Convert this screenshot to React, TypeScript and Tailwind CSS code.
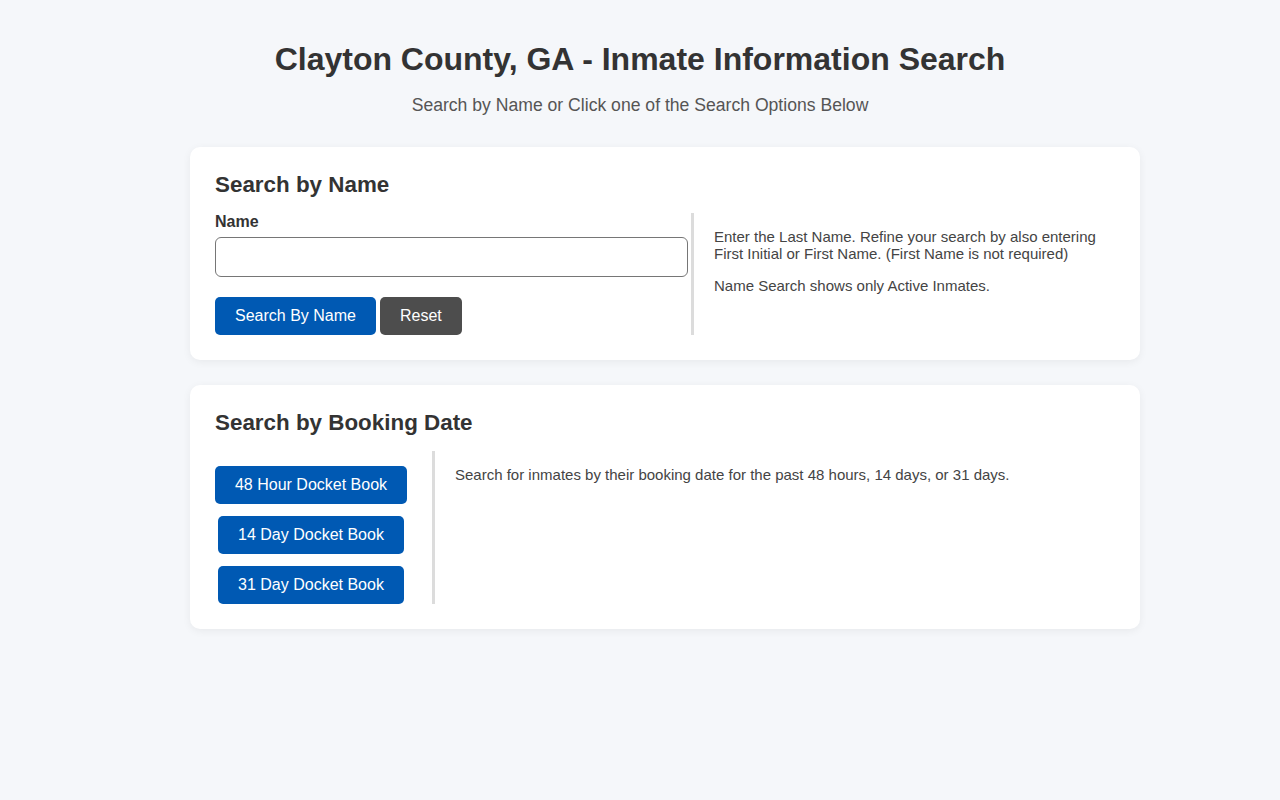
import React from "react";

export default function App() {
  return (
    <div className="min-h-[800px] bg-[#f5f7fa] pt-[41px] text-[#333]" style={{ fontFamily: '"Liberation Sans", Arial, sans-serif' }}>
      <h1 className="text-center text-[32px] font-bold leading-[37px] text-[#333]">
        Clayton County, GA - Inmate Information Search
      </h1>
      <p className="mt-[17px] text-center text-[17.6px] leading-[21px] text-[#555]">
        Search by Name or Click one of the Search Options Below
      </p>

      <div className="mx-auto mt-[31px] w-[1000px] pl-[50px]">
        <div className="w-[950px] rounded-[10px] bg-white px-[25px] pb-[25px] pt-[25px] shadow-[0_2px_8px_rgba(0,0,0,0.06)]">
          <h2 className="text-[22.4px] font-bold leading-[25px] text-[#333]">Search by Name</h2>
          <div className="mt-[16px] flex">
            <div className="w-[476px] pr-[3px]">
              <label className="block text-[16px] font-bold leading-[18px] text-[#333]">Name</label>
              <input
                type="text"
                className="mt-[6px] block h-[40px] w-[473px] rounded-[6px] border border-[#767676] bg-white px-2 text-[16px] outline-none"
              />
              <div className="mt-[20px] flex gap-[4px]">
                <button className="h-[38px] whitespace-nowrap rounded-[5px] bg-[#0059b3] px-5 text-[16px] leading-[18px] text-white">
                  Search By Name
                </button>
                <button className="h-[38px] whitespace-nowrap rounded-[5px] bg-[#4d4d4d] px-5 text-[16px] leading-[18px] text-white">
                  Reset
                </button>
              </div>
            </div>
            <div className="flex-1 border-l-[3px] border-[#dcdcdc] pl-[20px] pt-[15px] text-[15px] leading-[17px] text-[#444]">
              <p>Enter the Last Name. Refine your search by also entering First Initial or First Name. (First Name is not required)</p>
              <p className="mt-[15px]">Name Search shows only Active Inmates.</p>
            </div>
          </div>
        </div>

        <div className="mt-[25px] w-[950px] rounded-[10px] bg-white px-[25px] pb-[25px] pt-[25px] shadow-[0_2px_8px_rgba(0,0,0,0.06)]">
          <h2 className="text-[22.4px] font-bold leading-[25px] text-[#333]">Search by Booking Date</h2>
          <div className="mt-[16px] flex">
            <div className="flex w-[217px] flex-col items-start pt-[15px]">
              <div className="flex w-[192px] flex-col items-center gap-[12px]">
                <button className="h-[38px] whitespace-nowrap rounded-[5px] bg-[#0059b3] px-5 text-[16px] leading-[18px] text-white">
                  48 Hour Docket Book
                </button>
                <button className="h-[38px] whitespace-nowrap rounded-[5px] bg-[#0059b3] px-5 text-[16px] leading-[18px] text-white">
                  14 Day Docket Book
                </button>
                <button className="h-[38px] whitespace-nowrap rounded-[5px] bg-[#0059b3] px-5 text-[16px] leading-[18px] text-white">
                  31 Day Docket Book
                </button>
              </div>
            </div>
            <div className="flex-1 border-l-[3px] border-[#dcdcdc] pl-[20px] pt-[15px] text-[15px] leading-[17px] text-[#444]">
              <p>Search for inmates by their booking date for the past 48 hours, 14 days, or 31 days.</p>
            </div>
          </div>
        </div>
      </div>
    </div>
  );
}
